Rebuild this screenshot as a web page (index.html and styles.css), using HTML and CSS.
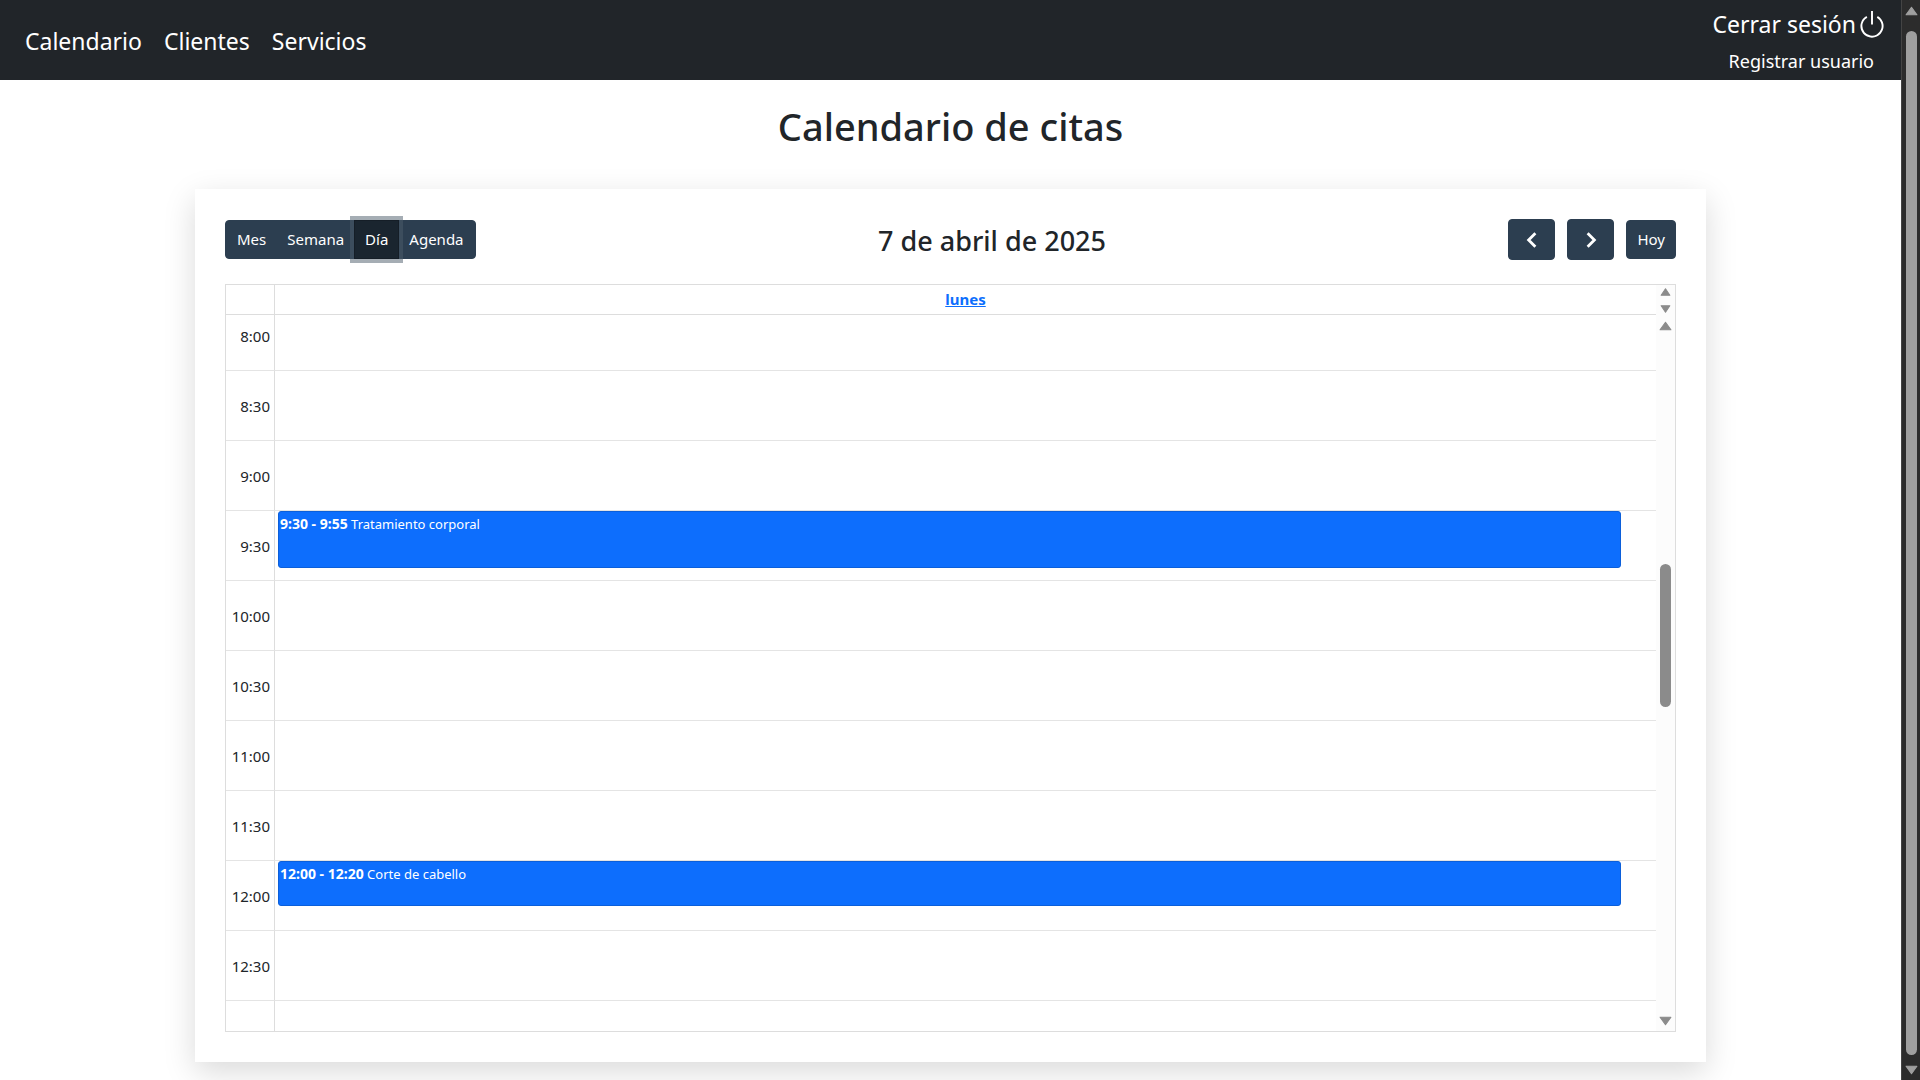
FILE: index.html
```html
<!DOCTYPE html>
<html lang="es">
<head>
<meta charset="utf-8">
<meta name="viewport" content="width=device-width, initial-scale=1">
<title>Calendario de citas</title>
<link rel="stylesheet" href="styles.css">
</head>
<body>
<div class="page">
  <header class="navbar">
    <nav class="nav-main">
      <a href="#">Calendario</a>
      <a href="#">Clientes</a>
      <a href="#">Servicios</a>
    </nav>
    <div class="nav-user">
      <a class="logout" href="#">Cerrar sesión<svg class="power" viewBox="2 1 12 14" aria-hidden="true"><path d="M7.5 1v7h1V1z"/><path d="M3 8.812a5 5 0 0 1 2.578-4.375l-.485-.874A6 6 0 1 0 11 3.616l-.501.865A5 5 0 1 1 3 8.812"/></svg></a>
      <a class="register" href="#">Registrar usuario</a>
    </div>
  </header>

  <main class="content">
    <h1 class="title">Calendario de citas</h1>
    <section class="card">
      <div class="toolbar">
        <div class="views">
          <button class="btn" type="button">Mes</button>
          <button class="btn" type="button">Semana</button>
          <button class="btn active" type="button">Día</button>
          <button class="btn" type="button">Agenda</button>
        </div>
        <h2 class="date">7 de abril de 2025</h2>
        <div class="moves">
          <button class="btn btn-icon" type="button" aria-label="Anterior"><svg class="chevron" viewBox="0 0 16 16" aria-hidden="true"><path d="M11 2 5 8l6 6"/></svg></button>
          <button class="btn btn-icon" type="button" aria-label="Siguiente"><svg class="chevron" viewBox="0 0 16 16" aria-hidden="true"><path d="m5 2 6 6-6 6"/></svg></button>
          <button class="btn" type="button">Hoy</button>
        </div>
      </div>

      <div class="grid">
        <div class="grid-head">
          <table class="days">
            <tr><td class="axis"></td><th scope="col"><a href="#">lunes</a></th></tr>
          </table>
          <div class="bar bar-small">
            <svg class="arrow" viewBox="0 0 12 10" aria-hidden="true"><path d="M6 2 10 8H2z"/></svg>
            <svg class="arrow" viewBox="0 0 12 10" aria-hidden="true"><path d="M6 8 2 2h8z"/></svg>
          </div>
        </div>
        <div class="grid-body">
          <table class="slots">
            <tr class="slot slot-first"><th class="axis" scope="row">8:00</th><td></td></tr>
            <tr class="slot"><th class="axis" scope="row">8:30</th><td></td></tr>
            <tr class="slot"><th class="axis" scope="row">9:00</th><td></td></tr>
            <tr class="slot"><th class="axis" scope="row">9:30</th><td><a class="event event-25" href="#"><b>9:30 - 9:55</b> Tratamiento corporal</a></td></tr>
            <tr class="slot"><th class="axis" scope="row">10:00</th><td></td></tr>
            <tr class="slot"><th class="axis" scope="row">10:30</th><td></td></tr>
            <tr class="slot"><th class="axis" scope="row">11:00</th><td></td></tr>
            <tr class="slot"><th class="axis" scope="row">11:30</th><td></td></tr>
            <tr class="slot"><th class="axis" scope="row">12:00</th><td><a class="event event-20" href="#"><b>12:00 - 12:20</b> Corte de cabello</a></td></tr>
            <tr class="slot"><th class="axis" scope="row">12:30</th><td></td></tr>
            <tr class="slot slot-last"><td class="axis"></td><td></td></tr>
          </table>
          <div class="bar">
            <svg class="arrow" viewBox="0 0 12 10" aria-hidden="true"><path d="M6 1.500 11 8.500H1z"/></svg>
            <div class="track"><div class="space-above"></div><div class="thumb"></div><div class="space-below"></div></div>
            <svg class="arrow" viewBox="0 0 12 10" aria-hidden="true"><path d="M6 8.500 1 1.500h10z"/></svg>
          </div>
        </div>
      </div>
    </section>
  </main>
</div>
<div class="bar window-bar">
  <svg class="arrow" viewBox="0 0 12 10" aria-hidden="true"><path d="M6 1.500 11 8.500H1z"/></svg>
  <div class="thumb"></div>
  <svg class="arrow" viewBox="0 0 12 10" aria-hidden="true"><path d="M6 8.500 1 1.500h10z"/></svg>
</div>
</body>
</html>
```

FILE: styles.css
```css
* { box-sizing: border-box; }

body {
  margin: 0;
  display: flex;
  min-height: 100vh;
  background: #fff;
  color: #212529;
  font-family: "Segoe UI", "Noto Sans", "Open Sans", sans-serif;
  font-size: 15px;
  line-height: 24px;
}

h1, h2 { margin: 0; font-weight: 500; }
a { color: inherit; text-decoration: none; }

.page { flex: 1; min-width: 0; }

.navbar {
  display: flex;
  justify-content: space-between;
  align-items: center;
  height: 80px;
  padding: 0 17px 0 25px;
  background: #212529;
  color: #fff;
  font-size: 23px;
}
.nav-main { display: flex; gap: 22px; padding-top: 2px; }
.nav-user { display: flex; flex-direction: column; align-items: flex-end; gap: 11px; padding-top: 3px; }
.logout { display: flex; align-items: center; gap: 4px; line-height: 28px; }
.power { width: 24px; height: 27px; fill: #fff; }
.register { padding-right: 10px; font-size: 18px; }

.content { padding: 18px 195px; }
.title {
  margin-bottom: 35px;
  font-size: 38px;
  line-height: 56px;
  text-align: center;
}

.card {
  padding: 30px;
  background: #fff;
  box-shadow: 0 10px 30px rgba(0, 0, 0, .15);
}

.toolbar {
  display: flex;
  justify-content: space-between;
  align-items: center;
  height: 41px;
  margin-bottom: 24px;
}
.date { padding-top: 2px; font-size: 27px; line-height: 40px; }
.views { display: flex; }
.moves { display: flex; align-items: center; gap: 12px; }

.btn {
  height: 39px;
  padding: 0 10px 2px;
  border: 1px solid #2c3e50;
  border-radius: 4px;
  background: #2c3e50;
  color: #fff;
  font: inherit;
}
.btn-icon {
  display: flex;
  align-items: center;
  justify-content: center;
  width: 47px;
  height: 41px;
  padding: 0;
}
.views .btn { border-radius: 0; }
.views .btn + .btn { margin-left: -1px; }
.views .btn:first-child { padding-left: 11px; border-radius: 4px 0 0 4px; }
.views .btn:last-child { padding-right: 11px; border-radius: 0 4px 4px 0; }
.views .active {
  z-index: 1;
  border-color: #151e27;
  background: #1a252f;
  box-shadow: 0 0 0 4px rgba(76, 91, 106, .5);
}
.chevron { width: 18px; height: 18px; fill: none; stroke: #fff; stroke-width: 2.5; }

.grid { border: 1px solid #ddd; }
.grid-head { display: flex; height: 30px; }
.grid-body { display: flex; }
table { flex: 1; border-collapse: separate; border-spacing: 0; table-layout: fixed; }
th, td { padding: 0; border-bottom: 1px solid #e4e4e4; }
.axis {
  width: 49px;
  padding-right: 4px;
  border-right: 1px solid #ddd;
  font-weight: 400;
  text-align: right;
}
.days th, .days td { height: 30px; padding-bottom: 2px; border-bottom-color: #ddd; }
.days a { color: #0d6efd; text-decoration: underline; }

.slot { height: 70px; }
.slot td { vertical-align: top; }
.slot-first { height: 56px; }
.slot-first .axis { padding-bottom: 14px; }
.slot-last { height: 30px; }
.slot-last td { border-bottom: 0; }

.event {
  display: block;
  margin: 0 35px 0 3px;
  padding: 0 1px;
  border: 1px solid #0b5fda;
  border-radius: 3px;
  background: #0d6efd;
  color: #fff;
  font-size: 13px;
}
.event b { font-size: 14px; }
.event-25 { height: 57px; }
.event-20 { height: 45px; }

.bar {
  display: flex;
  flex-direction: column;
  align-items: center;
  width: 19px;
  padding: 5px 0 4px;
  background: #fcfcfc;
  color: #8b8b8b;
}
.bar-small { justify-content: space-between; padding: 1px 0 0; }
.arrow { flex: none; width: 13px; height: 12px; fill: currentColor; stroke: currentColor; stroke-width: 1; stroke-linejoin: round; }
.track { flex: 1; display: flex; flex-direction: column; }
.space-above { flex: 232; }
.space-below { flex: 308; }
.thumb { width: 11px; border-radius: 6px; background: currentColor; }
.track .thumb { flex: 143; }

.window-bar {
  position: sticky;
  top: 0;
  gap: 9px;
  height: 100vh;
  border-left: 1px solid #444;
  background: #2c2c2c;
  color: #9f9f9f;
}
.window-bar .thumb { flex: 1; margin-top: 5px; }
```
